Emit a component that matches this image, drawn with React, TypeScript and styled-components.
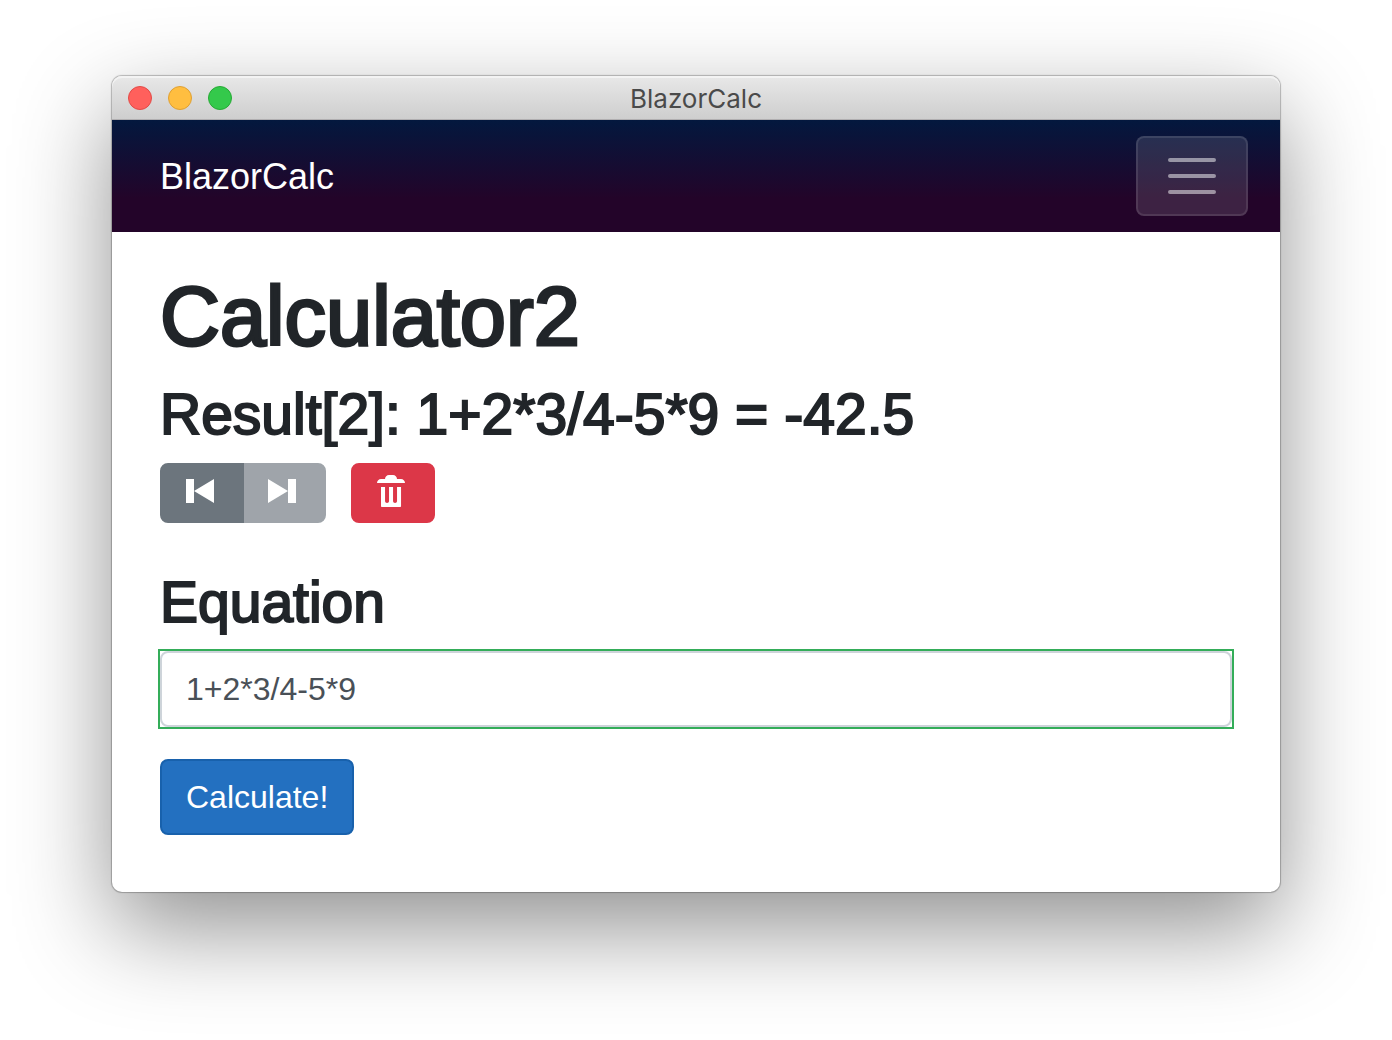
import React, { useState } from "react";
import styled, { createGlobalStyle } from "styled-components";

const GlobalStyle = createGlobalStyle`
  *, *::before, *::after { box-sizing: border-box; }
  body {
    margin: 0;
    background: #fff;
    color: #212529;
    font-family: "Liberation Sans", Arial, sans-serif;
  }
`;

const Desktop = styled.div`
  min-height: 100vh;
  padding: 76px 112px 148px;
  overflow: hidden;
`;

const AppWindow = styled.div`
  background: #fff;
  border-radius: 10px;
  box-shadow:
    0 0 1px 1px rgba(0, 0, 0, 0.25),
    0 36px 96px rgba(0, 0, 0, 0.44);
`;

const TitleBar = styled.header`
  display: grid;
  grid-template-columns: 1fr auto 1fr;
  align-items: center;
  height: 44px;
  padding: 0 16px;
  border-bottom: 1px solid #b0aeb0;
  border-radius: 10px 10px 0 0;
  background: linear-gradient(#e8e8e8, #cecece);
  box-shadow: inset 0 2px 0 #f3f3f3;
`;

const Lights = styled.div`
  display: flex;
  gap: 16px;
`;

const Light = styled.button<{ $fill: string; $edge: string }>`
  width: 24px;
  height: 24px;
  padding: 0;
  border: 1px solid ${(p) => p.$edge};
  border-radius: 50%;
  background: ${(p) => p.$fill};
`;

const WindowTitle = styled.span`
  padding-top: 2px;
  color: #4a4a4a;
  font: 400 26px/32px Inter, sans-serif;
`;

const NavBar = styled.nav`
  display: flex;
  align-items: center;
  justify-content: space-between;
  height: 112px;
  padding: 0 32px 0 48px;
  background: linear-gradient(#03183e 0%, #230429 70%);
`;

const Brand = styled.a`
  padding-top: 2px;
  color: #fff;
  font-size: 36px;
  line-height: 54px;
  text-decoration: none;
`;

const Toggler = styled.button`
  display: flex;
  align-items: center;
  justify-content: center;
  width: 112px;
  height: 80px;
  padding: 0;
  border: 2px solid rgba(255, 255, 255, 0.1);
  border-radius: 8px;
  background: rgba(255, 255, 255, 0.12);
`;

const Content = styled.main`
  padding: 37px 48px 57px;
`;

const PageTitle = styled.h1`
  margin: 0 0 15px;
  font-size: 83px;
  font-weight: 400;
  line-height: 96px;
  -webkit-text-stroke: 3px #212529;
`;

const SectionTitle = styled.h3`
  margin: 0 0 15px;
  font-size: 57px;
  font-weight: 400;
  line-height: 68px;
  -webkit-text-stroke: 2px #212529;
`;

const Toolbar = styled.div`
  display: flex;
  gap: 25px;
  margin-bottom: 45px;
`;

const ButtonGroup = styled.div`
  display: flex;
`;

const IconButton = styled.button<{ $color: string; $place?: "first" | "last" }>`
  height: 60px;
  padding: 10px 24px 14px;
  border: 2px solid ${(p) => p.$color};
  border-radius: ${(p) =>
    p.$place === "first" ? "8px 0 0 8px" : p.$place === "last" ? "0 8px 8px 0" : "8px"};
  margin-left: ${(p) => (p.$place === "last" ? "-2px" : "0")};
  background: ${(p) => p.$color};
  color: #fff;

  &:disabled { opacity: 0.65; }
`;

const Icon = styled.svg`
  display: block;
  width: 32px;
  height: 32px;
  fill: currentColor;
`;

const EquationLabel = styled.label`
  display: block;
`;

const ValidField = styled.div`
  margin-bottom: 32px;
  outline: 2px solid #34ad59;
`;

const EquationInput = styled.input`
  display: block;
  width: 100%;
  height: 76px;
  padding: 12px 24px;
  border: 2px solid #ced4da;
  border-radius: 8px;
  outline: none;
  background: #fff;
  color: #495057;
  font: 400 32px/48px "Liberation Sans", Arial, sans-serif;
`;

const PrimaryButton = styled.button`
  display: block;
  height: 76px;
  padding: 12px 24px;
  border: 2px solid #1861ac;
  border-radius: 8px;
  background: #2370c0;
  color: #fff;
  font: 400 32px/48px "Liberation Sans", Arial, sans-serif;
`;

const trashPath =
  "M3 0c-.55 0-1 .45-1 1h-1c-.55 0-1 .45-1 1h7c0-.55-.45-1-1-1h-1c0-.55-.45-1-1-1h-1zm-2 3v4.81c0 .11.08.19.19.19h4.63c.11 0 .19-.08.19-.19v-4.81h-1v3.5c0 .28-.22.5-.5.5s-.5-.22-.5-.5v-3.5h-1v3.5c0 .28-.22.5-.5.5s-.5-.22-.5-.5v-3.5h-1z";

export default function App() {
  const [equation, setEquation] = useState("1+2*3/4-5*9");

  return (
    <>
      <GlobalStyle />
      <Desktop>
        <AppWindow>
          <TitleBar>
            <Lights>
              <Light aria-label="Close" $fill="#ff605c" $edge="#e24b47" />
              <Light aria-label="Minimize" $fill="#ffbe40" $edge="#dfa033" />
              <Light aria-label="Zoom" $fill="#34c94b" $edge="#27aa35" />
            </Lights>
            <WindowTitle>BlazorCalc</WindowTitle>
          </TitleBar>
          <NavBar>
            <Brand href="#">BlazorCalc</Brand>
            <Toggler aria-label="Toggle navigation">
              <svg width="60" height="60" viewBox="0 0 30 30" aria-hidden="true">
                <path
                  d="M4 7h22M4 15h22M4 23h22"
                  stroke="rgba(255,255,255,0.5)"
                  strokeWidth="2"
                  strokeLinecap="round"
                  strokeMiterlimit="10"
                />
              </svg>
            </Toggler>
          </NavBar>
          <Content>
            <PageTitle>Calculator2</PageTitle>
            <SectionTitle>Result[2]: 1+2*3/4-5*9 = -42.5</SectionTitle>
            <Toolbar>
              <ButtonGroup>
                <IconButton $color="#6c757d" $place="first" aria-label="Previous result">
                  <Icon viewBox="0 0 8 8">
                    <path d="M0 1v6h2v-6h-2zm2 3l5 3v-6l-5 3z" />
                  </Icon>
                </IconButton>
                <IconButton $color="#6c757d" $place="last" aria-label="Next result" disabled>
                  <Icon viewBox="0 0 8 8">
                    <path d="M0 1v6l5-3-5-3zm5 3v3h2v-6h-2v3z" />
                  </Icon>
                </IconButton>
              </ButtonGroup>
              <IconButton $color="#dc3748" aria-label="Delete result">
                <Icon viewBox="0 0 8 8">
                  <path d={trashPath} />
                </Icon>
              </IconButton>
            </Toolbar>
            <SectionTitle>
              <EquationLabel htmlFor="equation">Equation</EquationLabel>
            </SectionTitle>
            <ValidField>
              <EquationInput
                id="equation"
                type="text"
                value={equation}
                onChange={(e) => setEquation(e.target.value)}
              />
            </ValidField>
            <PrimaryButton type="button">Calculate!</PrimaryButton>
          </Content>
        </AppWindow>
      </Desktop>
    </>
  );
}
